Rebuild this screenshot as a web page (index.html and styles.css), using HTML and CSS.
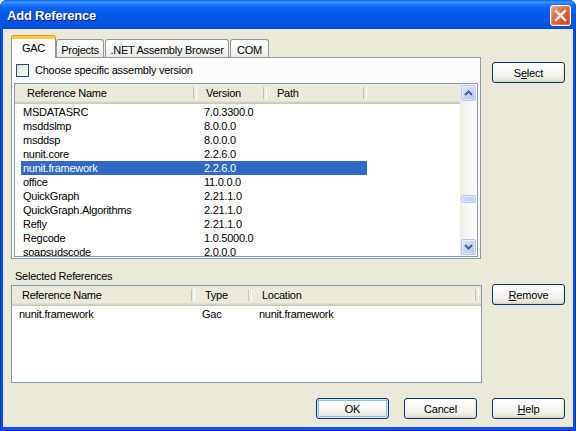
FILE: index.html
```html
<!DOCTYPE html>
<html>
<head>
<meta charset="utf-8">
<link rel="stylesheet" href="styles.css">
</head>
<body>
<div class="window">
  <div class="titlebar">
    <span class="title">Add Reference</span>
    <button class="close" aria-label="Close">
      <svg width="13" height="13" viewBox="0 0 13 13"><path d="M2 2 L11 11 M11 2 L2 11" stroke="#fff" stroke-width="2.4" stroke-linecap="square"/></svg>
    </button>
  </div>
  <div class="client">
    <div class="tabctl">
      <div class="tabs">
        <div class="tab active t-gac">GAC</div>
        <div class="tab t-proj">Projects</div>
        <div class="tab t-net">.NET Assembly Browser</div>
        <div class="tab t-com">COM</div>
      </div>
      <div class="panel">
        <label class="check-row"><span class="checkbox"></span><span>Choose specific assembly version</span></label>
        <div class="list list-gac">
          <div class="list-main">
            <div class="lv-header">
              <div class="hcell c1">Reference Name</div>
              <div class="hcell c2">Version</div>
              <div class="hcell c3">Path</div>
            </div>
            <div class="rows">
              <div class="row"><span class="c1">MSDATASRC</span><span class="c2">7.0.3300.0</span><span class="c3"></span></div>
              <div class="row"><span class="c1">msddslmp</span><span class="c2">8.0.0.0</span><span class="c3"></span></div>
              <div class="row"><span class="c1">msddsp</span><span class="c2">8.0.0.0</span><span class="c3"></span></div>
              <div class="row"><span class="c1">nunit.core</span><span class="c2">2.2.6.0</span><span class="c3"></span></div>
              <div class="row sel"><span class="c1">nunit.framework</span><span class="c2">2.2.6.0</span><span class="c3"></span></div>
              <div class="row"><span class="c1">office</span><span class="c2">11.0.0.0</span><span class="c3"></span></div>
              <div class="row"><span class="c1">QuickGraph</span><span class="c2">2.21.1.0</span><span class="c3"></span></div>
              <div class="row"><span class="c1">QuickGraph.Algorithms</span><span class="c2">2.21.1.0</span><span class="c3"></span></div>
              <div class="row"><span class="c1">Refly</span><span class="c2">2.21.1.0</span><span class="c3"></span></div>
              <div class="row"><span class="c1">Regcode</span><span class="c2">1.0.5000.0</span><span class="c3"></span></div>
              <div class="row"><span class="c1">soapsudscode</span><span class="c2">2.0.0.0</span><span class="c3"></span></div>
            </div>
          </div>
          <div class="vscroll">
            <div class="sbtn up"><svg width="9" height="6" viewBox="0 0 9 6"><path d="M1 5 L4.5 1.5 L8 5" fill="none" stroke="#4d6185" stroke-width="2"/></svg></div>
            <div class="thumb"></div>
            <div class="sbtn down"><svg width="9" height="6" viewBox="0 0 9 6"><path d="M1 1 L4.5 4.5 L8 1" fill="none" stroke="#4d6185" stroke-width="2"/></svg></div>
          </div>
        </div>
      </div>
    </div>
    <div class="side side-top">
      <button class="btn">S<u>e</u>lect</button>
    </div>

    <div class="sel-label">Selected References</div>

    <div class="list list-sel">
      <div class="list-main">
        <div class="lv-header">
          <div class="hcell s1">Reference Name</div>
          <div class="hcell s2">Type</div>
          <div class="hcell s3">Location</div>
        </div>
        <div class="rows">
          <div class="row"><span class="s1">nunit.framework</span><span class="s2">Gac</span><span class="s3">nunit.framework</span></div>
        </div>
      </div>
    </div>
    <div class="side side-mid">
      <button class="btn"><u>R</u>emove</button>
    </div>

    <div class="footer">
      <button class="btn default">OK</button>
      <button class="btn">Cancel</button>
      <button class="btn"><u>H</u>elp</button>
    </div>
  </div>
</div>
</body>
</html>
```
FILE: styles.css
```css
* { box-sizing: border-box; }
html, body { margin: 0; padding: 0; background: #fff; }
body {
  font-family: "Liberation Sans", Arial, sans-serif;
  font-size: 11px;
  letter-spacing: -0.25px;
  color: #000;
}
.window {
  width: 576px;
  height: 431px;
  display: flex;
  flex-direction: column;
  background: #0055e5;
  border-radius: 7px 7px 0 0;
  overflow: hidden;
  box-shadow: inset 1px 0 0 #0831d9, inset -1px 0 0 #0831d9, inset 0 -1px 0 #0831d9;
}
.titlebar {
  height: 29px;
  flex: none;
  display: flex;
  align-items: center;
  justify-content: space-between;
  padding: 1px 5px 0 7px;
  background: linear-gradient(to bottom, #0a5fe9 0px, #3d95ff 2px, #1a73fa 5px, #0860f2 9px, #0058ee 14px, #0056e8 22px, #0052de 27px, #0049d0 29px);
}
.title {
  color: #fff;
  font-weight: bold;
  font-size: 13px;
  letter-spacing: -0.2px;
  text-shadow: 1px 1px 0 #0a1883;
}
.close {
  width: 21px;
  height: 21px;
  padding: 0;
  border: 1px solid #fff;
  border-radius: 3px;
  background: linear-gradient(135deg, #f3a98c 0%, #e5704a 35%, #d9532b 70%, #c8411b 100%);
  display: flex;
  align-items: center;
  justify-content: center;
  box-shadow: inset 0 0 0 1px rgba(255,255,255,0.2);
}
.client {
  flex: 1;
  margin: 0 3px 4px 3px;
  background: #ece9d8;
  padding: 7px 8px 0 8px;
  display: grid;
  grid-template-columns: 471px 73px;
  column-gap: 10px;
  align-content: start;
}

/* Tabs */
.tabctl { width: 470px; }
.tabs {
  height: 21px;
  display: flex;
  align-items: flex-end;
  position: relative;
  z-index: 2;
}
.tab {
  height: 18px;
  border: 1px solid #919b9c;
  border-bottom: none;
  border-radius: 3px 3px 0 0;
  background: linear-gradient(to bottom, #ffffff 0%, #f7f7f4 50%, #ecebe5 100%);
  display: flex;
  align-items: center;
  justify-content: center;
  padding-top: 2px;
  white-space: nowrap;
}
.tab.active {
  height: 22px;
  margin-bottom: -1px;
  background: #fcfcfe;
  border-top: 3px solid #ffc83c;
  box-shadow: 0 -1px 0 #e68b2c;
  padding-top: 0;
  padding-bottom: 2px;
}
.t-gac { width: 45px; }
.t-proj { width: 48px; }
.t-net { width: 124px; margin-left: 1px; }
.t-com { width: 39px; margin-left: 1px; }

.panel {
  height: 202px;
  border: 1px solid #919b9c;
  background: linear-gradient(to bottom, #fcfcfe 0%, #fbfbfc 70%, #f6f6f3 100%);
  padding: 6px 2px 1px 2px;
}
.check-row {
  height: 13px;
  display: flex;
  align-items: center;
  margin-left: 2px;
  margin-bottom: 6px;
  line-height: 13px;
}
.checkbox {
  width: 13px;
  height: 13px;
  border: 1px solid #1c5180;
  background: linear-gradient(135deg, #dcdcd7 0%, #f0f0ea 50%, #ffffff 100%);
  margin-right: 6px;
  flex: none;
}

/* List views */
.list {
  border: 1px solid #7f9db9;
  background: #fff;
  display: flex;
  overflow: hidden;
}
.list-gac { height: 174px; width: 464px; }
.list-main { flex: 1; min-width: 0; overflow: hidden; }
.lv-header {
  height: 20px;
  display: flex;
  background: linear-gradient(to bottom, #ebeadb 0, #ebeadb 17px, #e2dfce 17px, #e2dfce 18px, #d6d2c2 18px, #d6d2c2 19px, #cbc7b8 19px, #cbc7b8 20px);
}
.hcell {
  height: 17px;
  line-height: 17px;
  padding-top: 1px;
  position: relative;
  white-space: nowrap;
  flex: none;
}
.hcell::after {
  content: "";
  position: absolute;
  right: 0;
  top: 3px;
  bottom: 2px;
  width: 2px;
  border-left: 1px solid #c7c5b2;
  border-right: 1px solid #ffffff;
}
.rows { padding-top: 1px; }
.rows .row {
  height: 14px;
  line-height: 14px;
  display: flex;
  white-space: nowrap;
}
.row > span { flex: none; overflow: hidden; }

/* upper list columns */
.list-gac .hcell.c1 { width: 182px; padding-left: 12px; }
.list-gac .hcell.c2 { width: 70px; padding-left: 9px; }
.list-gac .hcell.c3 { width: 100px; padding-left: 10px; }
.list-gac .row .c1 { width: 182px; padding-left: 8px; }
.list-gac .row .c2 { width: 70px; padding-left: 7px; }
.list-gac .row .c3 { width: 100px; }
.list-gac .row.sel .c1 { margin-left: 6px; width: 176px; padding-left: 2px; }
.list-gac .row.sel span { background: #316ac5; color: #fff; }

/* scrollbar */
.vscroll {
  width: 17px;
  flex: none;
  display: flex;
  flex-direction: column;
  align-items: center;
  background: linear-gradient(to right, #eeede5 0%, #f7f6f1 40%, #fdfdfa 100%);
}
.sbtn {
  width: 15px;
  height: 16px;
  border: 1px solid #b4c8f6;
  border-radius: 2px;
  background: linear-gradient(135deg, #dfe8fe 0%, #c6d6fc 50%, #b3c7f6 100%);
  display: flex;
  align-items: center;
  justify-content: center;
  box-shadow: inset 0 0 0 1px rgba(255,255,255,0.5);
}
.sbtn.up { margin-top: 1px; }
.sbtn.down { margin-top: auto; margin-bottom: 1px; }
.thumb {
  width: 15px;
  height: 8px;
  margin-top: 94px;
  border: 1px solid #b4c8f6;
  border-radius: 2px;
  background: linear-gradient(to right, #c9d8fc 0%, #bdd0fa 100%);
  box-shadow: inset 0 0 0 1px rgba(255,255,255,0.5);
}

/* selected refs */
.sel-label {
  grid-column: 1 / 3;
  margin-top: 10px;
  height: 14px;
  line-height: 14px;
  padding-left: 4px;
}
.list-sel {
  margin-top: 2px;
  height: 98px;
  width: 471px;
}
.list-sel .hcell.s1 { width: 183px; padding-left: 10px; }
.list-sel .hcell.s2 { width: 57px; padding-left: 10px; }
.list-sel .hcell.s3 { width: 227px; padding-left: 10px; }
.list-sel .row .s1 { width: 183px; padding-left: 7px; }
.list-sel .row .s2 { width: 57px; padding-left: 7px; }
.list-sel .row .s3 { width: 227px; padding-left: 7px; }

/* buttons */
.side-top { padding-top: 26px; }
.side-mid { padding-top: 1px; }
.btn {
  width: 73px;
  height: 21px;
  padding: 0;
  font-family: "Liberation Sans", Arial, sans-serif;
  font-size: 11px;
  letter-spacing: -0.2px;
  color: #000;
  border: 1px solid #003c74;
  border-radius: 3px;
  background: linear-gradient(to bottom, #ffffff 0%, #fbfbf9 30%, #f2f1eb 70%, #e6e3d6 90%, #d6d0c5 100%);
  box-shadow: inset -1px -1px 0 rgba(214,208,197,0.6);
  display: block;
}
.btn.default {
  box-shadow: inset 0 0 0 1px #cee7ff, inset 0 0 0 2px #98b8ea;
  background: linear-gradient(to bottom, #ffffff 0%, #fbfbf9 30%, #f2f1eb 70%, #e6e3d6 100%);
}
.footer {
  grid-column: 1 / 3;
  display: flex;
  justify-content: flex-end;
  gap: 15px;
  margin-top: 15px;
}
```
